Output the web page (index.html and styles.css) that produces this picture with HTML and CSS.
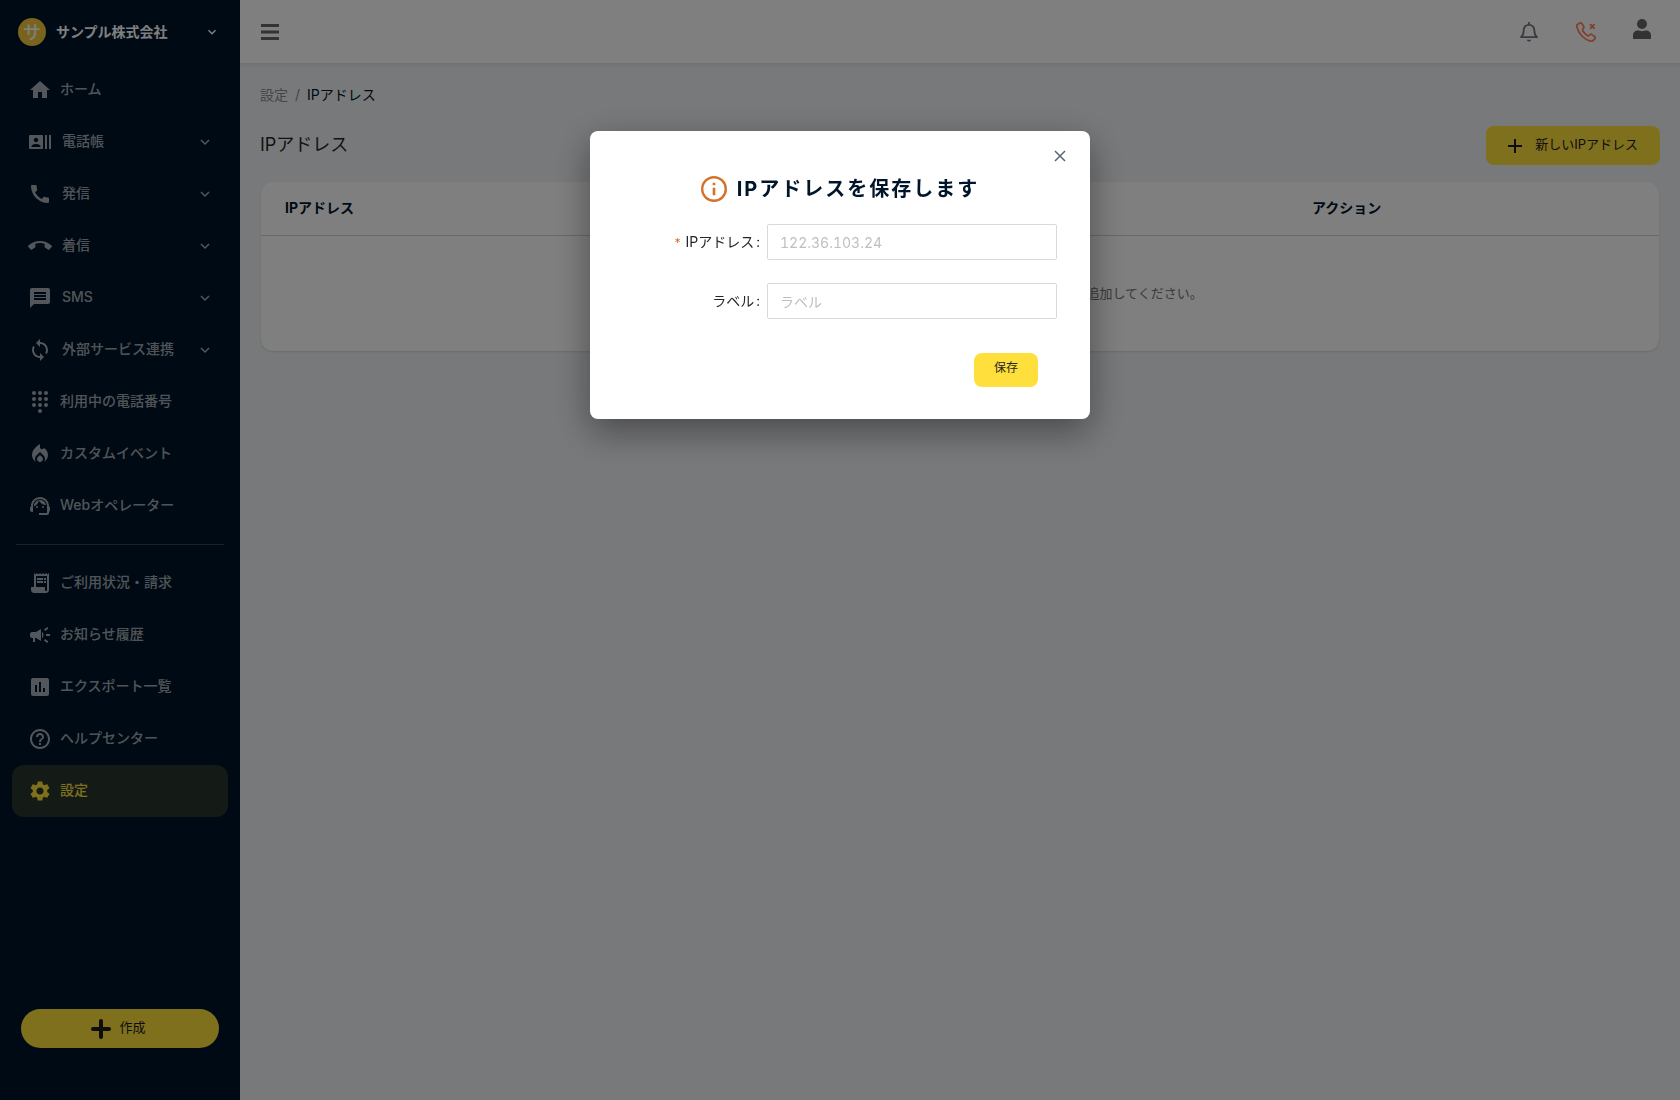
FILE: index.html
```html
<!DOCTYPE html>
<html lang="ja">
<head>
<meta charset="utf-8">
<meta name="viewport" content="width=device-width, initial-scale=1.0">
<title>IPアドレス</title>
<link rel="stylesheet" href="styles.css">
</head>
<body>
<div class="layout">
  <aside class="sidebar">
    <button type="button" class="company">
      <span class="company-logo">サ</span>
      <span class="company-name">サンプル株式会社</span>
      <svg class="chevron" viewBox="0 0 10 10"><path d="M1.5 3.2 5 6.7l3.5-3.5"/></svg>
    </button>
    <nav class="menu">
      <a class="menu-item" href="#">
        <svg class="icon" viewBox="0 0 24 24"><path d="M10 20v-6h4v6h5v-8h3L12 3 2 12h3v8z"/></svg>
        <span>ホーム</span>
      </a>
      <a class="menu-item has-sub" href="#">
        <svg class="icon" viewBox="0 0 24 24"><path d="M21 5v14h2V5h-2zm-4 14h2V5h-2v14zM14 5H2c-.55 0-1 .45-1 1v12c0 .55.45 1 1 1h12c.55 0 1-.45 1-1V6c0-.55-.45-1-1-1zM8 7.75c1.24 0 2.25 1.01 2.25 2.25S9.24 12.25 8 12.25 5.75 11.24 5.75 10 6.76 7.75 8 7.75zM12.5 17h-9v-.75c0-1.5 3-2.25 4.5-2.25s4.5.75 4.5 2.25V17z"/></svg>
        <span>電話帳</span>
        <svg class="chevron" viewBox="0 0 10 10"><path d="M1 3l4 4 4-4"/></svg>
      </a>
      <a class="menu-item has-sub" href="#">
        <svg class="icon" viewBox="0 0 24 24"><path d="M20.01 15.38c-1.23 0-2.42-.2-3.53-.56-.35-.12-.74-.03-1.01.24l-1.57 1.97c-2.83-1.35-5.48-3.9-6.89-6.83l1.95-1.66c.27-.28.35-.67.24-1.02-.37-1.11-.56-2.3-.56-3.53 0-.54-.45-.99-.99-.99H4.19C3.65 3 3 3.24 3 3.99 3 13.28 10.73 21 20.01 21c.71 0 .99-.63.99-1.18v-3.45c0-.54-.45-.99-.99-.99z"/></svg>
        <span>発信</span>
        <svg class="chevron" viewBox="0 0 10 10"><path d="M1 3l4 4 4-4"/></svg>
      </a>
      <a class="menu-item has-sub" href="#">
        <svg class="icon" viewBox="0 0 24 24"><path d="M12 9c-1.6 0-3.15.25-4.6.72v3.1c0 .39-.23.74-.56.9-.98.49-1.87 1.12-2.66 1.85-.18.18-.43.28-.7.28-.28 0-.53-.11-.71-.29L.29 13.08c-.18-.17-.29-.42-.29-.7 0-.28.11-.53.29-.71C3.34 8.78 7.46 7 12 7s8.66 1.78 11.71 4.67c.18.18.29.43.29.71 0 .28-.11.53-.29.71l-2.48 2.48c-.18.18-.43.29-.71.29-.27 0-.52-.11-.7-.28-.79-.74-1.69-1.36-2.67-1.85-.33-.16-.56-.5-.56-.9v-3.1C15.15 9.25 13.6 9 12 9z"/></svg>
        <span>着信</span>
        <svg class="chevron" viewBox="0 0 10 10"><path d="M1 3l4 4 4-4"/></svg>
      </a>
      <a class="menu-item has-sub" href="#">
        <svg class="icon" viewBox="0 0 24 24"><path d="M20 2H4c-1.1 0-1.99.9-1.99 2L2 22l4-4h14c1.1 0 2-.9 2-2V4c0-1.1-.9-2-2-2zm-2 12H6v-2h12v2zm0-3H6V9h12v2zm0-3H6V6h12v2z"/></svg>
        <span>SMS</span>
        <svg class="chevron" viewBox="0 0 10 10"><path d="M1 3l4 4 4-4"/></svg>
      </a>
      <a class="menu-item has-sub" href="#">
        <svg class="icon" viewBox="0 0 24 24"><path d="M12 4V1L8 5l4 4V6c3.31 0 6 2.69 6 6 0 1.01-.25 1.97-.7 2.8l1.46 1.46C19.54 15.03 20 13.57 20 12c0-4.42-3.58-8-8-8zm0 14c-3.31 0-6-2.69-6-6 0-1.01.25-1.97.7-2.8L5.24 7.74C4.46 8.97 4 10.43 4 12c0 4.42 3.58 8 8 8v3l4-4-4-4v3z"/></svg>
        <span>外部サービス連携</span>
        <svg class="chevron" viewBox="0 0 10 10"><path d="M1 3l4 4 4-4"/></svg>
      </a>
      <a class="menu-item" href="#">
        <svg class="icon" viewBox="0 0 24 24">
          <circle cx="6" cy="3" r="2"/><circle cx="12" cy="3" r="2"/><circle cx="18" cy="3" r="2"/>
          <circle cx="6" cy="9" r="2"/><circle cx="12" cy="9" r="2"/><circle cx="18" cy="9" r="2"/>
          <circle cx="6" cy="15" r="2"/><circle cx="12" cy="15" r="2"/><circle cx="18" cy="15" r="2"/>
          <circle cx="12" cy="21" r="2"/>
        </svg>
        <span>利用中の電話番号</span>
      </a>
      <a class="menu-item" href="#">
        <svg class="icon" viewBox="0 0 24 24"><path d="m12 12.9-2.13 2.09c-.56.56-.87 1.29-.87 2.07C9 18.68 10.35 20 12 20s3-1.32 3-2.94c0-.78-.31-1.52-.87-2.07L12 12.9z"/><path d="m16 6-.44.55C14.38 8.02 12 7.19 12 5.3V2S4 6 4 13c0 2.92 1.56 5.47 3.89 6.86-.56-.79-.89-1.76-.89-2.8 0-1.32.52-2.56 1.47-3.5L12 10.1l3.53 3.47c.95.93 1.47 2.17 1.47 3.5 0 1.02-.31 1.96-.85 2.75 1.89-1.15 3.29-3.06 3.71-5.3.66-3.55-1.07-6.9-3.86-8.52z"/></svg>
        <span>カスタムイベント</span>
      </a>
      <a class="menu-item" href="#">
        <svg class="icon" viewBox="0 0 24 24"><path d="M21 12.22C21 6.73 16.74 3 12 3c-4.69 0-9 3.65-9 9.28-.6.34-1 .98-1 1.72v2c0 1.1.9 2 2 2h1v-6.1c0-3.87 3.13-7 7-7s7 3.13 7 7V19h-8v2h8c1.1 0 2-.9 2-2v-1.22c.59-.31 1-.92 1-1.64v-2.3c0-.7-.41-1.31-1-1.62z"/><circle cx="9" cy="13" r="1"/><circle cx="15" cy="13" r="1"/><path d="M18 11.03C17.52 8.18 15.04 6 12.05 6c-3.03 0-6.29 2.51-6.03 6.45 2.47-1.01 4.33-3.21 4.86-5.89 1.31 2.63 4 4.44 7.12 4.47z"/></svg>
        <span>Webオペレーター</span>
      </a>
      <hr class="divider">
      <a class="menu-item" href="#">
        <svg class="icon" viewBox="0 0 24 24"><path d="M19.5 3.5 18 2l-1.5 1.5L15 2l-1.5 1.5L12 2l-1.5 1.5L9 2 7.5 3.5 6 2v14H3v3c0 1.66 1.34 3 3 3h12c1.66 0 3-1.34 3-3V2l-1.5 1.5zM19 19c0 .55-.45 1-1 1s-1-.45-1-1v-3H8V5h11v14z"/><path d="M9 7h6v2H9zM16 7h2v2h-2zM9 10h6v2H9zM16 10h2v2h-2z"/></svg>
        <span>ご利用状況・請求</span>
      </a>
      <a class="menu-item" href="#">
        <svg class="icon" viewBox="0 0 24 24"><path d="M18 11v2h4v-2h-4zm-2 6.61c.96.71 2.21 1.65 3.2 2.39.4-.53.8-1.07 1.2-1.6-.99-.74-2.24-1.68-3.2-2.4-.4.54-.8 1.08-1.2 1.61zM20.4 5.6c-.4-.53-.8-1.07-1.2-1.6-.99.74-2.24 1.68-3.2 2.4.4.53.8 1.07 1.2 1.6.96-.72 2.21-1.65 3.2-2.4zM4 9c-1.1 0-2 .9-2 2v2c0 1.1.9 2 2 2h1v4h2v-4h1l5 3V6L8 9H4zm11.5 3c0-1.33-.58-2.53-1.5-3.35v6.69c.92-.81 1.5-2.01 1.5-3.34z"/></svg>
        <span>お知らせ履歴</span>
      </a>
      <a class="menu-item" href="#">
        <svg class="icon" viewBox="0 0 24 24"><path d="M19 3H5c-1.1 0-2 .9-2 2v14c0 1.1.9 2 2 2h14c1.1 0 2-.9 2-2V5c0-1.1-.9-2-2-2zM9 17H7v-7h2v7zm4 0h-2V7h2v10zm4 0h-2v-4h2v4z"/></svg>
        <span>エクスポート一覧</span>
      </a>
      <a class="menu-item" href="#">
        <svg class="icon" viewBox="0 0 24 24"><path d="M11 18h2v-2h-2v2zm1-16C6.48 2 2 6.48 2 12s4.48 10 10 10 10-4.48 10-10S17.52 2 12 2zm0 18c-4.41 0-8-3.59-8-8s3.59-8 8-8 8 3.59 8 8-3.59 8-8 8zm0-14c-2.21 0-4 1.79-4 4h2c0-1.1.9-2 2-2s2 .9 2 2c0 2-3 1.75-3 5h2c0-2.25 3-2.5 3-5 0-2.21-1.79-4-4-4z"/></svg>
        <span>ヘルプセンター</span>
      </a>
      <a class="menu-item active" href="#">
        <svg class="icon" viewBox="0 0 24 24"><path d="M19.14 12.94c.04-.3.06-.61.06-.94 0-.32-.02-.64-.07-.94l2.03-1.58c.18-.14.23-.41.12-.61l-1.92-3.32c-.12-.22-.37-.29-.59-.22l-2.39.96c-.5-.38-1.03-.7-1.62-.94l-.36-2.54c-.04-.24-.24-.41-.48-.41h-3.84c-.24 0-.43.17-.47.41l-.36 2.54c-.59.24-1.13.57-1.62.94l-2.39-.96c-.22-.08-.47 0-.59.22L2.74 8.87c-.12.21-.08.47.12.61l2.03 1.58c-.05.3-.09.63-.09.94s.02.64.07.94l-2.03 1.58c-.18.14-.23.41-.12.61l1.92 3.32c.12.22.37.29.59.22l2.39-.96c.5.38 1.03.7 1.62.94l.36 2.54c.05.24.24.41.48.41h3.84c.24 0 .44-.17.47-.41l.36-2.54c.59-.24 1.13-.56 1.62-.94l2.39.96c.22.08.47 0 .59-.22l1.92-3.32c.12-.22.07-.47-.12-.61l-2.01-1.58zM12 15.6c-1.98 0-3.6-1.62-3.6-3.6s1.62-3.6 3.6-3.6 3.6 1.62 3.6 3.6-1.62 3.6-3.6 3.6z"/></svg>
        <span>設定</span>
      </a>
    </nav>
    <button type="button" class="create-button">
      <svg viewBox="0 0 20 20" width="20" height="20"><path d="M10 2v16M2 10h16" fill="none" stroke="currentColor" stroke-width="4" stroke-linecap="round"/></svg>
      <span class="button-text">作成</span>
    </button>
  </aside>

  <div class="main">
    <header class="topbar">
      <button type="button" class="icon-button" aria-label="メニュー">
        <svg width="18" height="18" viewBox="0 0 18 18"><path d="M0 2.5h18M0 9h18M0 15.5h18" stroke="currentColor" stroke-width="3"/></svg>
      </button>
      <div class="topbar-actions">
        <button type="button" class="icon-button bell" aria-label="通知">
          <svg width="20" height="20" viewBox="0 0 20 20"><path d="M10 .8v2M2 15.2h16c-2-1.6-2.6-3-2.6-6.4 0-3.6-2.2-6-5.4-6s-5.4 2.4-5.4 6c0 3.4-.6 4.8-2.6 6.4z" fill="none" stroke="currentColor" stroke-width="1.8" stroke-linejoin="round" stroke-linecap="round"/><path d="M7.7 17.8h4.6c-.4 1.2-1.2 1.8-2.3 1.8s-1.9-.6-2.3-1.8z" fill="currentColor"/></svg>
        </button>
        <button type="button" class="icon-button phone" aria-label="通話">
          <svg width="20" height="20" viewBox="0 0 20 20" fill="none" stroke="currentColor" stroke-width="1.7" stroke-linejoin="round"><path d="M4.2.9 1.6 2.2C.8 2.7.6 3.5.8 4.5c1.2 7 7.7 13.5 13.9 14.7 1 .2 1.7 0 2.3-.6l2-2c.5-.6.5-1.3-.1-1.8l-3-2.2c-.6-.5-1.3-.5-1.9 0l-1.2.9c-.6.4-1.2.3-1.7-.1C9.3 12 7.8 10.4 6.7 8.7c-.4-.6-.3-1.1.1-1.6l.7-1c.5-.6.5-1.2.1-1.8L5.8 1.5C5.4.8 4.9.6 4.2.9z"/><path d="M14 2.2l4.6 4.6M18.6 2.2 14 6.8"/></svg>
        </button>
        <button type="button" class="icon-button user" aria-label="アカウント">
          <svg width="18" height="20" viewBox="0 0 18 20" fill="currentColor"><circle cx="9" cy="5" r="5"/><path d="M0 19.5v-3c0-3 2-5 5-5 1.2 0 2 .7 4 .7s2.8-.7 4-.7c3 0 5 2 5 5v3c0 .3-.2.5-.5.5H.5c-.3 0-.5-.2-.5-.5z"/></svg>
        </button>
      </div>
    </header>

    <main class="content">
      <nav class="breadcrumb">
        <a href="#">設定</a>
        <span class="separator">/</span>
        <span class="current">IPアドレス</span>
      </nav>
      <div class="page-head">
        <h1>IPアドレス</h1>
        <button type="button" class="add-button">
          <svg viewBox="0 0 14 14" width="14" height="14"><path d="M7 0v14M0 7h14" stroke="currentColor" stroke-width="2"/></svg>
          <span class="button-text">新しいIPアドレス</span>
        </button>
      </div>
      <div class="card">
        <table class="ip-table">
          <thead>
            <tr><th>IPアドレス</th><th>ラベル</th><th class="col-action">アクション</th></tr>
          </thead>
          <tbody>
            <tr><td class="empty" colspan="3">IPアドレスがまだ登録されていません。新しいIPアドレスを1つ追加してください。</td></tr>
          </tbody>
        </table>
      </div>
    </main>
  </div>
</div>

<div class="overlay">
  <div class="modal" role="dialog" aria-modal="true" aria-labelledby="modal-title">
    <button type="button" class="modal-close" aria-label="閉じる">
      <svg width="12" height="12" viewBox="0 0 12 12"><path d="M1 1l10 10M11 1 1 11" fill="none" stroke="currentColor" stroke-width="1.5"/></svg>
    </button>
    <h2 class="modal-title" id="modal-title">
      <svg width="26" height="26" viewBox="0 0 26 26"><circle cx="13" cy="13" r="11.8" fill="none" stroke="currentColor" stroke-width="2.4"/><path d="M11.7 6.8h2.6v2.5h-2.6zM11.7 11.8h2.6v7.5h-2.6z" fill="currentColor"/></svg>
      <span>IPアドレスを保存します</span>
    </h2>
    <form class="ip-form">
      <div class="form-row">
        <label class="required" for="ip">IPアドレス</label>
        <input type="text" id="ip" placeholder="122.36.103.24">
      </div>
      <div class="form-row">
        <label for="label">ラベル</label>
        <input type="text" id="label" placeholder="ラベル">
      </div>
      <button type="button" class="save-button"><span class="button-text">保存</span></button>
    </form>
  </div>
</div>
</body>
</html>
```
FILE: styles.css
```css
* {
    box-sizing: border-box;
}
body {
    margin: 0;
    font-family: Inter, "Noto Sans CJK JP", sans-serif;
    font-size: 14px;
    line-height: 22px;
    font-variant-numeric: tabular-nums;
    color: #262626;
    background: #f0f2f5;
}
button {
    font-family: inherit;
    line-height: 22px;
    border: none;
    padding: 0;
    background: none;
    cursor: pointer;
}
a {
    text-decoration: none;
}
svg {
    flex: none;
    display: block;
}
.button-text {
    display: block;
    padding-bottom: 4px;
}
.layout {
    display: flex;
    min-height: 100vh;
}

/* sidebar */
.sidebar {
    width: 240px;
    flex: none;
    display: flex;
    flex-direction: column;
    padding-bottom: 52px;
    background: #001529;
}
.company {
    display: flex;
    align-items: center;
    gap: 10px;
    height: 64px;
    padding: 0 23px 0 18px;
    color: #fff;
    text-align: left;
}
.company-logo {
    width: 28px;
    height: 28px;
    border-radius: 50%;
    background: #f2c93a;
    font-size: 18px;
    line-height: 30px;
    font-weight: 500;
    text-align: center;
}
.company-name {
    flex: 1;
    font-size: 14px;
    line-height: 22px;
    font-weight: 700;
}
.chevron {
    width: 10px;
    height: 10px;
    fill: none;
    stroke: currentColor;
    stroke-width: 1.5;
}
.menu {
    flex: 1;
    padding: 0 12px;
}
.menu-item {
    display: flex;
    align-items: center;
    gap: 8px;
    height: 52px;
    padding: 0 18px 0 16px;
    border-radius: 12px;
    color: rgba(255, 255, 255, 0.65);
    font-weight: 500;
}
.menu-item.has-sub {
    gap: 10px;
}
.menu-item span {
    flex: 1;
    padding-bottom: 2px;
}
.menu-item.active {
    background: rgba(255, 223, 60, 0.16);
    color: #ffe03c;
}
.icon {
    width: 24px;
    height: 24px;
    fill: currentColor;
    overflow: visible;
}
.divider {
    margin: 12px 4px;
    border: none;
    border-top: 1px solid rgba(255, 255, 255, 0.2);
}
.create-button {
    display: flex;
    align-items: center;
    justify-content: center;
    gap: 8px;
    height: 39px;
    margin: 0 21px;
    padding-right: 3px;
    border-radius: 20px;
    background: #ffe03c;
    color: #1a1a1a;
    font-size: 13px;
}

/* top bar */
.main {
    flex: 1;
    min-width: 0;
}
.topbar {
    display: flex;
    align-items: center;
    justify-content: space-between;
    height: 63px;
    padding: 0 29px 0 21px;
    background: #fff;
    box-shadow: 0 1px 4px rgba(0, 21, 41, 0.12);
}
.topbar-actions {
    display: flex;
    align-items: center;
    gap: 37px;
}
.icon-button {
    color: #666;
}
.bell {
    color: #707780;
}
.phone {
    color: #ff8054;
}
.user {
    padding-bottom: 6px;
}

/* content */
.content {
    padding: 21px 20px;
}
.breadcrumb {
    display: flex;
    gap: 7px;
    color: #8c8c8c;
}
.breadcrumb a {
    color: #8c8c8c;
}
.breadcrumb .current {
    color: #001529;
}
.page-head {
    display: flex;
    align-items: center;
    justify-content: space-between;
    margin: 20px 0 17px;
}
.page-head h1 {
    margin: 0;
    padding-bottom: 2px;
    font-size: 18px;
    line-height: 26px;
    font-weight: 400;
}
.add-button {
    display: flex;
    align-items: center;
    gap: 13px;
    height: 39px;
    padding: 0 22px;
    border-radius: 8px;
    background: #ffe03c;
    color: #1a1a1a;
    font-size: 13px;
}
.card {
    margin: 0 1px;
    border-radius: 12px;
    background: #fff;
    box-shadow: 0 1px 2px rgba(0, 0, 0, 0.12);
}
.ip-table {
    width: 100%;
    border-collapse: collapse;
    table-layout: fixed;
}
.ip-table th {
    padding: 15px 24px 16px;
    border-bottom: 1px solid #d0d3d8;
    color: #001529;
    font-weight: 700;
    text-align: left;
}
.ip-table .col-action {
    width: 371px;
}
.ip-table .empty {
    height: 115px;
    padding: 0 24px;
    color: #737373;
    font-size: 13px;
    text-align: center;
}

/* modal */
.overlay {
    position: fixed;
    inset: 0;
    padding-top: 131px;
    background: rgba(0, 0, 0, 0.5);
}
.modal {
    position: relative;
    width: 500px;
    max-width: 100%;
    margin: 0 auto;
    padding: 43px 32px 32px;
    border-radius: 8px;
    background: #fff;
    box-shadow: 0 12px 36px rgba(0, 0, 0, 0.4);
}
.modal-close {
    position: absolute;
    top: 19px;
    right: 24px;
    color: #5c6670;
}
.modal-title {
    display: flex;
    align-items: center;
    justify-content: center;
    gap: 10px;
    margin: 0 0 20px;
    font-size: 20px;
    line-height: 30px;
    letter-spacing: 2px;
    color: #001529;
}
.modal-title svg {
    color: #d4722a;
}
.ip-form {
    display: flex;
    flex-direction: column;
}
.form-row {
    display: grid;
    grid-template-columns: 138px 290px;
    gap: 7px;
    align-items: center;
    margin-bottom: 23px;
}
.form-row label {
    text-align: right;
}
.form-row label::after {
    content: ":";
    margin-left: 2px;
}
.form-row .required::before {
    content: "*";
    margin-right: 4px;
    color: #d4722a;
    font-size: 12px;
}
.form-row input {
    width: 100%;
    height: 36px;
    padding: 0 12px;
    border: 1px solid #d9d9d9;
    border-radius: 2px;
    font: inherit;
    font-variant-numeric: tabular-nums;
}
.form-row input::placeholder {
    color: #bfbfbf;
    opacity: 1;
}
.save-button {
    align-self: flex-end;
    margin: 11px 20px 0 0;
    height: 34px;
    padding: 0 20px;
    border-radius: 8px;
    background: #ffdf3c;
    color: #262626;
    font-size: 12px;
}
```
